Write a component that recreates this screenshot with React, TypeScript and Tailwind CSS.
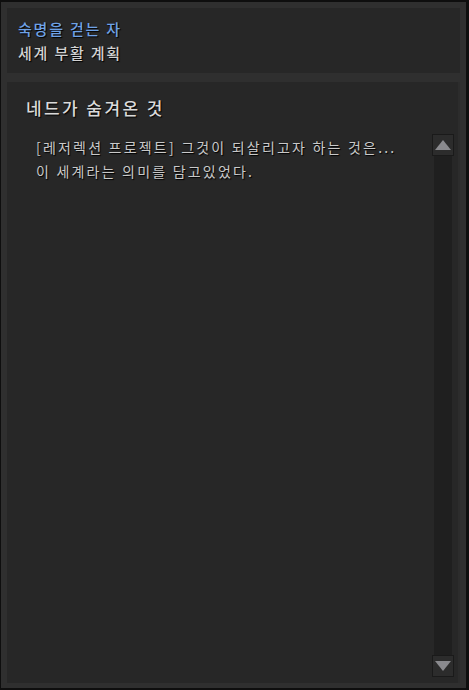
import { useState } from "react";

const font = { fontFamily: '"Noto Sans CJK KR", "Noto Sans", sans-serif' };

const ScrollButton = ({ up }: { up?: boolean }) => (
  <div className="flex h-[22px] w-[22px] items-center justify-center border border-[#1a1a1a] bg-[#2c2c2c]">
    <div
      className={`h-0 w-0 border-x-[8px] border-x-transparent ${
        up ? "border-b-[10px] border-b-[#8a8a8e]" : "border-t-[10px] border-t-[#8a8a8e]"
      }`}
    />
  </div>
);

export default function App() {
  const [lines] = useState([
    "[레저렉션 프로젝트] 그것이 되살리고자 하는 것은...",
    "이 세계라는 의미를 담고있었다.",
  ]);

  return (
    <div
      className="flex h-[690px] w-[469px] flex-col border-y-2 border-r-[3px] border-l border-[#0e0e0e] bg-[#2f2f2f] px-[6px] pt-[6px] pb-[5px] [text-shadow:1px_1px_1px_#000]"
      style={font}
    >
      <div className="flex h-[65px] shrink-0 flex-col justify-center gap-[4px] bg-[#272727] pl-[11px]">
        <p className="text-[15px] leading-[20px] font-medium tracking-[1.8px] text-[#6fa2e6]">숙명을 걷는 자</p>
        <p className="text-[15px] leading-[20px] font-medium tracking-[1.8px] text-[#d2d2d2]">세계 부활 계획</p>
      </div>

      <div className="mt-[9px] flex flex-1 flex-col bg-[#272727] border-r-[2px] border-[#2c2c2c]">
        <h2 className="mt-[14px] pl-[19px] text-[17px] leading-[24px] font-medium tracking-[2.4px] text-[#dadada]">
          네드가 숨겨온 것
        </h2>
        <div className="mt-[14px] flex flex-1 pb-[6px]">
          <div className="flex-1 pl-[29px] pt-[1px]">
            {lines.map((l) => (
              <p key={l} className="whitespace-nowrap text-[14px] leading-[24px] tracking-[2.2px] text-[#c9c9c9]">
                {l}
              </p>
            ))}
          </div>
          <div className="mr-[4px] flex w-[22px] flex-col items-center">
            <ScrollButton up />
            <div className="w-[18px] flex-1 bg-[#1f1f1f]" />
            <ScrollButton />
          </div>
        </div>
      </div>
    </div>
  );
}
